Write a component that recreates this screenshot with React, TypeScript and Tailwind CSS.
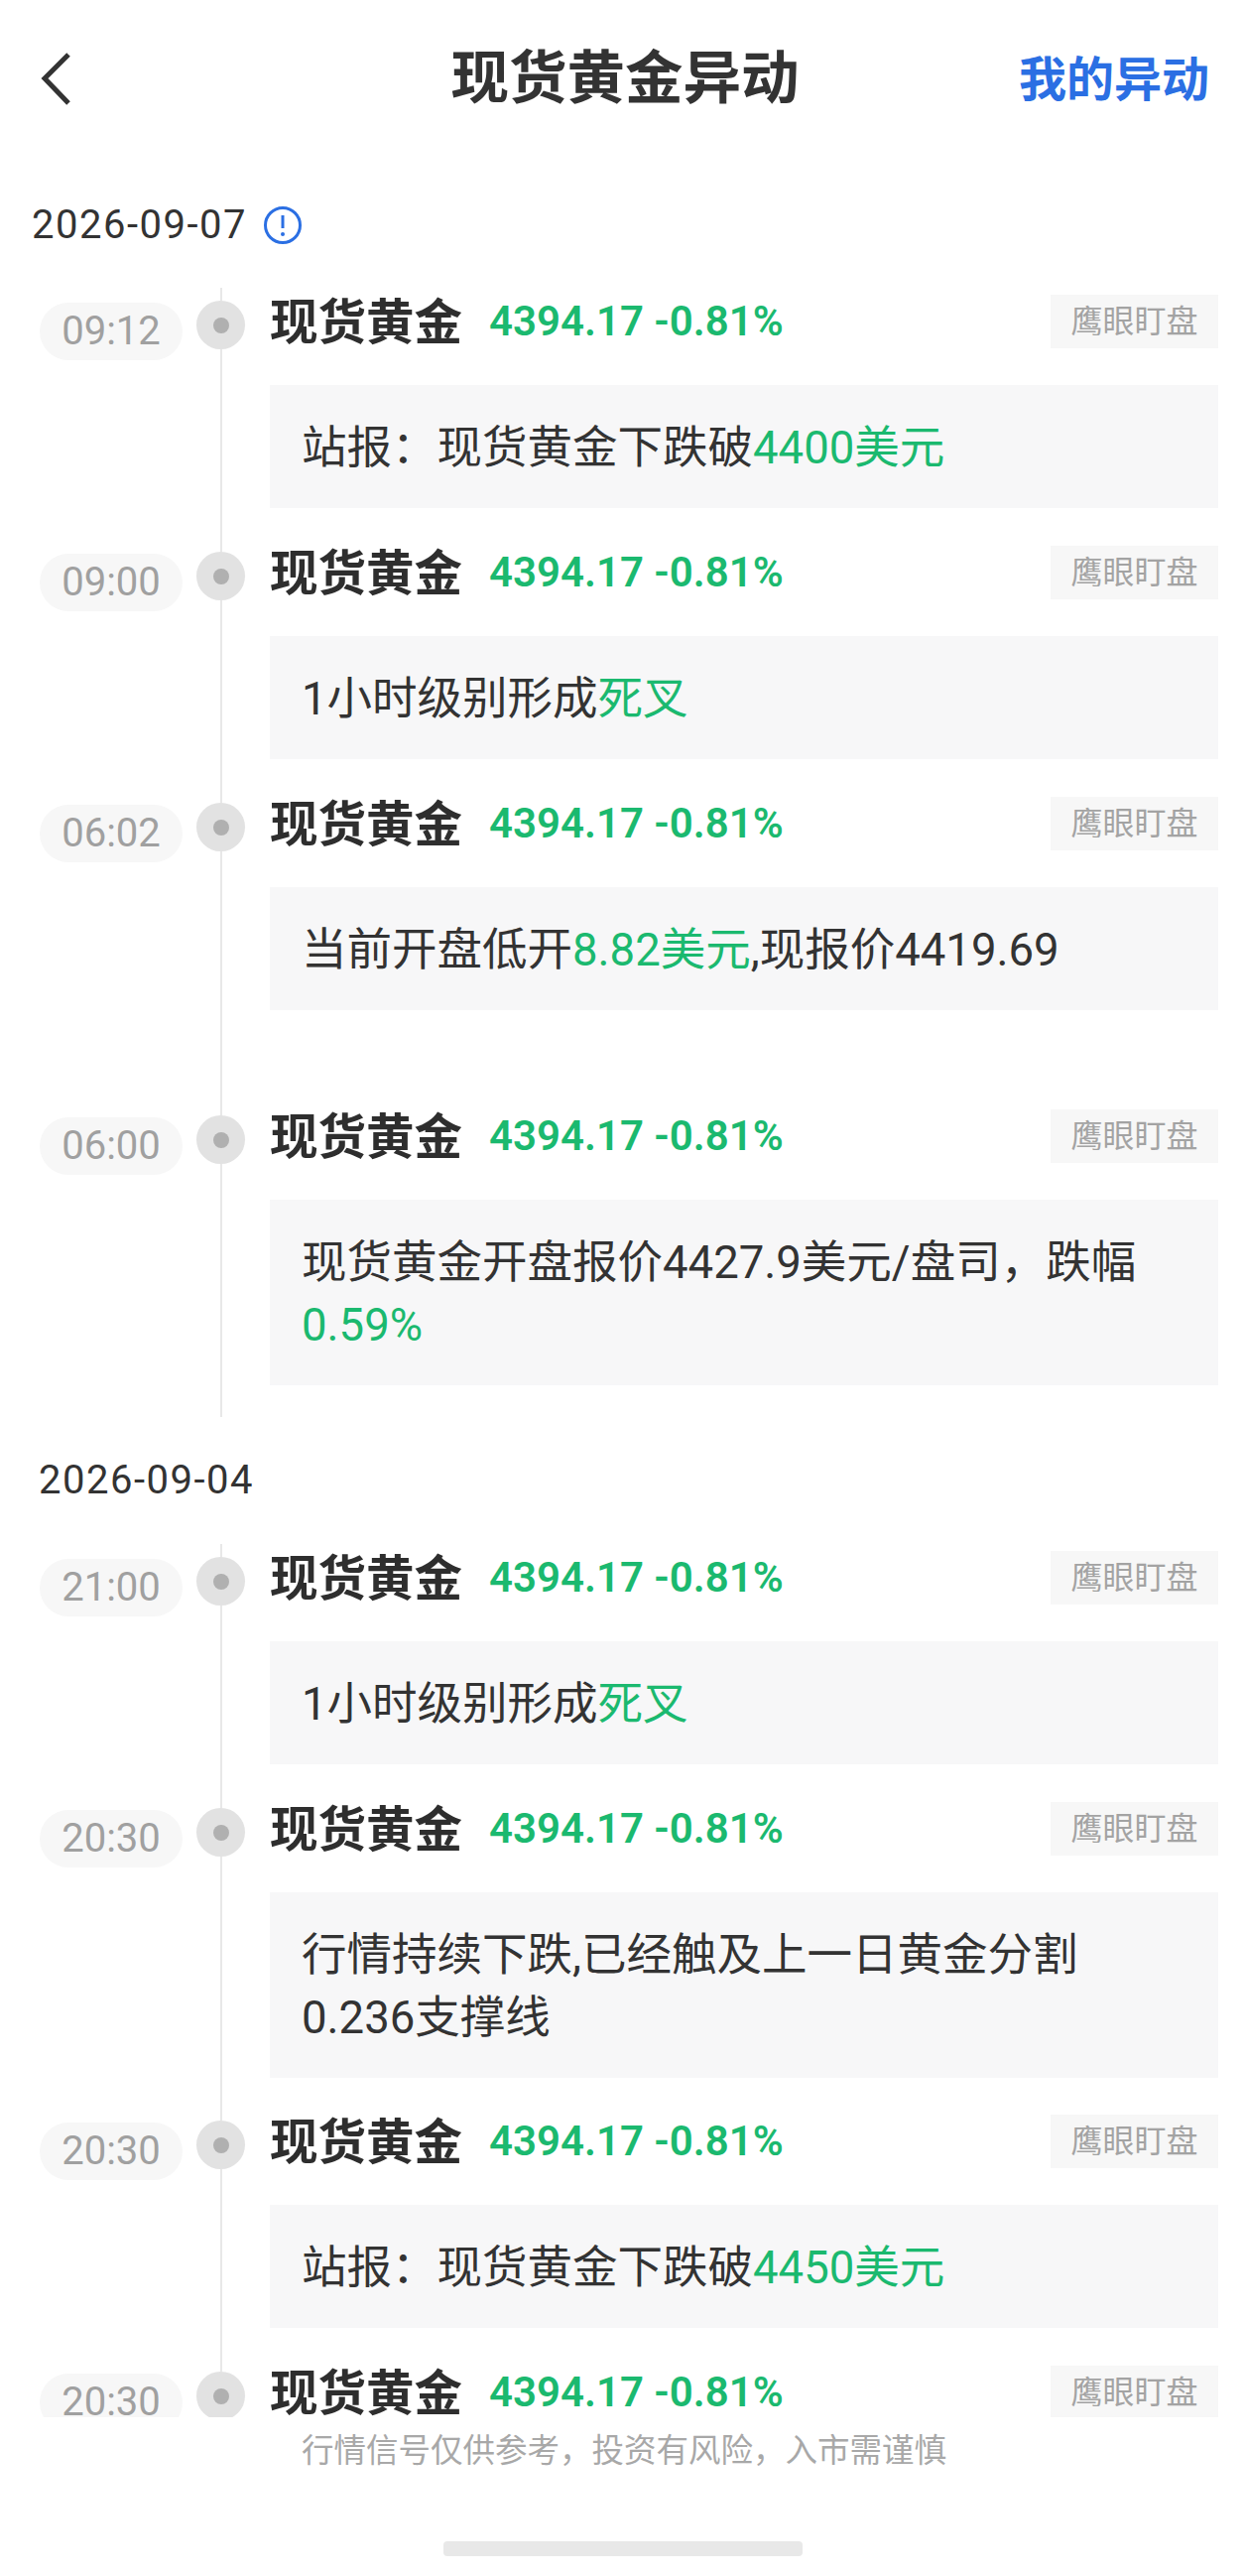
import type { ReactNode } from "react";

const FONT = "font-['Roboto','Noto_Sans_CJK_SC',sans-serif]";

const Up = ({ children }: { children: ReactNode }) => (
  <span className="text-[#1bb96f]">{children}</span>
);

type Item = { time: string; body?: ReactNode; gap?: string };

const firstDay: Item[] = [
  {
    time: "09:12",
    body: (
      <>
        站报：现货黄金下跌破<Up>4400美元</Up>
      </>
    ),
  },
  {
    time: "09:00",
    body: (
      <>
        1小时级别形成<Up>死叉</Up>
      </>
    ),
  },
  {
    time: "06:02",
    gap: "pb-[100px]",
    body: (
      <>
        当前开盘低开<Up>8.82美元</Up>,现报价4419.69
      </>
    ),
  },
  {
    time: "06:00",
    gap: "pb-8",
    body: (
      <>
        现货黄金开盘报价4427.9美元/盘司，跌幅<Up>0.59%</Up>
      </>
    ),
  },
];

const secondDay: Item[] = [
  {
    time: "21:00",
    body: (
      <>
        1小时级别形成<Up>死叉</Up>
      </>
    ),
  },
  {
    time: "20:30",
    gap: "pb-[37px]",
    body: "行情持续下跌,已经触及上一日黄金分割0.236支撑线",
  },
  {
    time: "20:30",
    body: (
      <>
        站报：现货黄金下跌破<Up>4450美元</Up>
      </>
    ),
  },
  { time: "20:30" },
];

function Row({ item }: { item: Item }) {
  return (
    <div className="flex">
      <div className="w-[198px] shrink-0 pl-10 pt-2">
        <div className="flex h-[58px] w-[144px] items-center justify-center rounded-full bg-[#f7f7f7] text-[40px] leading-none text-[#a0a0a0]">
          {item.time}
        </div>
      </div>
      <div className="flex w-[49px] shrink-0 flex-col items-center">
        <div className="h-1.5 w-0.5 bg-[#e8e8e8]" />
        <div className="flex size-[49px] shrink-0 items-center justify-center rounded-full bg-[#e2e2e2]">
          <div className="size-4 rounded-full bg-[#b0b0b0]" />
        </div>
        <div className="w-0.5 flex-1 bg-[#e8e8e8]" />
      </div>
      <div className={"ml-[25px] w-[956px] " + (item.gap ?? "pb-[38px]")}>
        <div className="flex h-[54px] items-center">
          <span className="mt-[5px] text-[48.5px] font-bold leading-none text-[#2e2e2e]">现货黄金</span>
          <span className="ml-[27px] text-[42px] font-semibold leading-none text-[#1bb96f]">
            4394.17 -0.81%
          </span>
          <span className="ml-auto flex h-[54px] w-[169px] items-center justify-center bg-[#f7f7f7] text-[32px] leading-none text-[#a3a3a3]">
            鹰眼盯盘
          </span>
        </div>
        {item.body && (
          <div className="mt-[37px] bg-[#f7f7f8] pb-[29px] pl-[32px] pr-[60px] pt-[32px] text-[45.5px] leading-[63px] text-[#333333]">
            {item.body}
          </div>
        )}
      </div>
    </div>
  );
}

export default function App() {
  return (
    <div className={FONT + " flex h-[2596px] w-[1256px] flex-col overflow-hidden bg-white"}>
      <div className="flex h-[156px] shrink-0 items-start justify-between pl-10 pr-[37px] pt-[50px]">
        <svg width="32" height="56" viewBox="0 0 32 56" fill="none" className="mt-[1px]">
          <path d="M29 4 L5 28 L29 53" stroke="#333333" strokeWidth="5" />
        </svg>
        <h1 className="absolute left-[2px] top-[50px] w-[1256px] text-center text-[58.5px] font-bold leading-[58px] text-[#333333]">
          现货黄金异动
        </h1>
        <span className="mt-[3px] text-[48px] font-bold leading-[56px] text-[#2b6fe3]">我的异动</span>
      </div>

      <div className="h-[2280px] shrink-0 overflow-hidden">
        <div className="mt-[39px] flex h-16 items-center gap-[17px] pl-[32px] text-[40px] tracking-[1.5px] text-[#333333]">
          2026-09-07
          <svg width="38" height="38" viewBox="0 0 38 38" fill="none">
            <circle cx="19" cy="19" r="17.5" stroke="#2b6fe3" strokeWidth="3" />
            <path d="M19 9 V22" stroke="#2b6fe3" strokeWidth="3" />
            <circle cx="19" cy="28" r="2" fill="#2b6fe3" />
          </svg>
        </div>
        <div className="ml-[222px] mt-[31px] h-[7px] w-0.5 bg-[#e8e8e8]" />
        {firstDay.map((item, i) => (
          <Row key={i} item={item} />
        ))}
        <div className="flex h-[128px] items-center pl-[39px] text-[40px] tracking-[1.5px] text-[#333333]">
          2026-09-04
        </div>
        <div className="ml-[222px] h-[7px] w-0.5 bg-[#e8e8e8]" />
        {secondDay.map((item, i) => (
          <Row key={i} item={item} />
        ))}
      </div>

      <div className="mt-4 pl-[304px] text-[32.5px] leading-9 text-[#a8a8a8]">
        行情信号仅供参考，投资有风险，入市需谨慎
      </div>
      <div className="mx-auto mt-[73px] h-[15px] w-[362px] rounded-[4px] bg-[#e8e8e8]" />
    </div>
  );
}
